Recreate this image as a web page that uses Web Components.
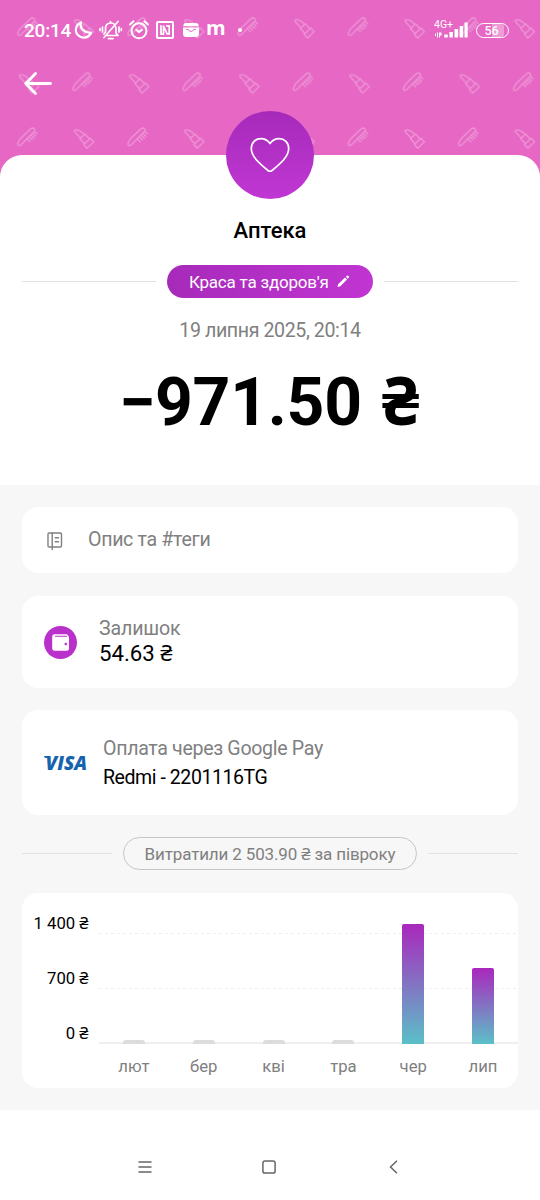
<!DOCTYPE html>
<html lang="uk">
<head>
<meta charset="utf-8">
<title>Аптека</title>
<style>
  body { margin: 0; background: #fff; font-family: Roboto, "Noto Sans", sans-serif; color: #000; }
</style>
</head>
<body>
<payment-screen></payment-screen>
<script>
const define = (name, html) => {
  const t = document.createElement('template');
  t.innerHTML = html;
  customElements.define(name, class extends HTMLElement {
    constructor() {
      super();
      this.attachShadow({ mode: 'open' }).appendChild(t.content.cloneNode(true));
    }
  });
};

define('status-bar', `
<style>
  :host { display: flex; align-items: center; height: 60px; padding: 0 31px 0 24px; box-sizing: border-box; color: #fff; }
  .time { font-size: 19px; font-weight: 500; width: 50px; letter-spacing: -.2px; white-space: nowrap; }
  svg { display: block; flex: none; overflow: visible; fill: none; stroke: #fff; stroke-width: 2; stroke-linecap: round; stroke-linejoin: round; }
  .m { font-family: "Open Sans", sans-serif; font-weight: 700; font-size: 20px; line-height: 20px; width: 18px; margin: -4px 0 0 7px; }
  .dot { width: 4px; height: 4px; border-radius: 2px; background: #fff; margin-left: 14px; }
  .net { margin-left: auto; width: 35px; height: 18px; position: relative; }
  .g { display: block; font-size: 10.5px; line-height: 9px; white-space: nowrap; margin-top: -1px; }
  .bat { box-sizing: border-box; width: 33px; height: 15px; border: 1.5px solid #fff; border-radius: 8px; margin-left: 7px; padding: 0 3px 0 1px; font-size: 12.5px; font-weight: 500; line-height: 13px; text-align: center;
    background: linear-gradient(90deg, transparent 0 14px, rgba(255,255,255,.35) 14px 26px, transparent 26px) content-box; }
</style>
<span class="time">20:14</span>
<svg width="18" height="18" viewBox="0 0 18 18"><path stroke-width="2.200" d="M7 1.500A7.800 7.800 0 1 0 17 11.500A9 8 0 0 1 7 1.500Z"/></svg>
<svg width="23" height="20" viewBox="0 0 23 20" style="margin-left:7px;stroke-width:1.700"><path d="M7.500 15.500H19L17 13V9C17 5 15 3 11.800 3S6.500 5 6.500 8.500V12L5 14M11.500 1.500V2.500M9.500 18.700H14M5 17.500L19 1.500M3.500 7V12M1 8.500V10.500M20 7V12M22.300 8.500V10.500"/></svg>
<svg width="20" height="20" viewBox="0 0 20 20" style="margin-left:7px"><circle cx="10" cy="10.800" r="7.500"/><path d="M7.200 9.800L9.800 12.100L13 9.800M1 4.500L4.500 1.300M15.500 1.300L19 4.500"/></svg>
<svg width="18" height="18" viewBox="0 0 18 18" style="margin-left:7px"><rect x="1" y="1" width="16" height="16" rx=".8"/><path style="stroke-width:1.700" d="M5 4.800V13.200H7.500V5L11.200 13H13.200V4.800H10.800"/></svg>
<svg width="16" height="14" viewBox="0 0 16 14" style="margin-left:9px"><path style="stroke:none" fill="#fff" d="M3 0H13Q15.700 0 15.700 3.200H.3Q.3 0 3 0ZM0 4.500H16V10.500Q16 14 13 14H3Q0 14 0 10.500Z"/><path d="M3.500 6.500H5L7 8.300H9L11 6.500H12.500" style="stroke:#e667c4;stroke-width:1"/></svg>
<span class="m">m</span><span class="dot"></span>
<div class="net"><span class="g">4G+</span>
<svg style="position:absolute;left:0;top:1px" width="34" height="16" viewBox="0 0 34 16"><path style="stroke:none" fill="#fff" d="M1 11.500h1v2.500H1zM3 10.500h1v5H3zM5 10.500h2.500v3H6v2H5zM10.200 12.500h3.600v3h-3.600zM15.400 10h3.500v5.500h-3.500zM20.500 7h3.600v8.500h-3.600zM25.700 4h3.500v11.500h-3.500zM30.500 .5h3.200v15h-3.200z"/></svg></div>
<div class="bat">56</div>`);

define('beauty-pattern', `
<style>:host { display: block; } svg { display: block; width: 100%; height: 100%; }</style>
<svg aria-hidden="true">
  <defs>
    <g id="comb"><path d="M.9 18Q-.2 17 .8 15.500L2.500 12L13.400 1.600Q15.500 0 17.200 1.800Q18.200 2.900 17.200 4L9.600 11.400L8.300 13L3.700 17.600Q2 19 .9 18ZM9.600 11.400L12.600 14.500M11.500 9.600L14.800 12.600M13.300 7.800L17 11M15.100 6L18.500 9M16.900 4.200L20 6.500"/></g>
    <g id="lipstick"><path transform="translate(9.600 10) rotate(-43)" d="M-4.600 4.300H4.600V9.300H-4.600ZM-3.400 4.300V-2.500H3.400V4.300M-2.500 -2.500V-9.800C-2.500 -12.800 -1.500 -12.800 0 -11.300C1.800 -9.500 2.500 -7.500 2.500 -5.500V-2.500"/></g>
    <pattern id="tile" width="110.200" height="110.200" patternUnits="userSpaceOnUse">
      <g fill="none" stroke="#fff" stroke-opacity=".3" stroke-width="1.300" stroke-linejoin="round" stroke-linecap="round">
        <use href="#comb" x="17.300" y="17"/><use href="#comb" x="72.400" y="72.100"/>
        <use href="#lipstick" x="74.500" y="18"/><use href="#lipstick" x="19.400" y="73.100"/>
      </g>
    </pattern>
  </defs>
  <rect width="100%" height="100%" fill="url(#tile)"/>
</svg>`);

define('back-button', `
<style>:host { display: block; padding: 12px 0 0 24px; } svg { display: block; }</style>
<svg width="28" height="23" viewBox="0 0 28 23" fill="none" stroke="#fff" stroke-width="2.800" stroke-linecap="round" stroke-linejoin="round"><path d="M11.500 1.500L1.800 11.500L11.500 21.500M1.800 11.500H26.500"/></svg>`);

define('divider-row', `
<style>
  :host { display: flex; align-items: center; gap: 11px; margin: 0 22px; }
  :host::before, :host::after { content: ""; flex: 1; height: 1px; background: #e1e1e1; }
</style><slot></slot>`);

define('category-chip', `
<style>
  :host { display: flex; align-items: center; justify-content: center; gap: 8px; box-sizing: border-box; width: 206px; height: 33px; border-radius: 17px; color: #fff; font-size: 17px; letter-spacing: -.2px; white-space: nowrap; padding-right: 2px; background: linear-gradient(100deg, #a62aba, #c135d2); }
</style><slot></slot>
<svg width="12.500" height="12.500" viewBox="0 0 13 13" fill="#fff"><path d="M.5 12.500L1.200 9.500L8.300 2.700L10.400 4.800L3.500 11.700ZM9.200 1.900L10.600.6Q11.100.2 11.600.7L12.400 1.500Q12.900 2 12.500 2.500L11.200 3.900Z"/></svg>`);

define('outline-chip', `
<style>:host { display: flex; align-items: center; justify-content: center; box-sizing: border-box; width: 294px; height: 33px; border: 1.5px solid #c6c6c6; border-radius: 17px; color: #808080; font-size: 17px; letter-spacing: -.14px; white-space: nowrap; }</style><slot></slot>`);

define('category-badge', `
<style>:host { display: flex; align-items: center; justify-content: center; width: 88px; height: 88px; border-radius: 50%; background: linear-gradient(#a62aba, #c037d3); }</style>
<svg width="40" height="36" viewBox="0 0 40 36" fill="none" stroke="#fff" stroke-width="1.700" stroke-linejoin="round"><path d="M20 6.500C17.500 3 14 1.600 11 1.600C5.500 1.600 1.300 5.500 1.300 11.500C1.300 19.500 9 26 18 33.500Q20 35 22 33.500C31 26 38.700 19.500 38.700 11.500C38.700 5.500 34.500 1.600 29 1.600C26 1.600 22.500 3 20 6.500Z"/></svg>`);

define('info-card', `
<style>
  :host { display: flex; align-items: center; box-sizing: border-box; margin: 0 22px; padding-left: 22px; border-radius: 16px; background: #fff; }
  .text { display: flex; flex-direction: column; white-space: nowrap; }
  ::slotted([slot=icon]) { flex: none; display: block; }
</style>
<slot name="icon"></slot><div class="text"><slot></slot></div>`);

define('wallet-icon', `
<style>:host { display: block; } svg { display: block; }</style>
<svg width="33" height="33" viewBox="0 0 33 33"><circle cx="16.500" cy="16.500" r="16.500" fill="#b930cb"/><path d="M10.500 8.200H22.500Q24 8.200 24 9.800Q25 10.300 25 12V22.500Q25 24.800 22.700 24.800H10.700Q8.200 24.800 8.200 22.300V10.500Q8.200 8.200 10.500 8.200Z" fill="#fff"/><path d="M11.500 10.200H22.500" stroke="#b930cb" stroke-width="1.100" stroke-linecap="round"/><circle cx="21.800" cy="18" r="1.300" fill="#b930cb"/></svg>`);

define('note-icon', `
<style>:host { display: block; } svg { display: block; }</style>
<svg width="16" height="19" viewBox="0 0 16 19" fill="none" stroke="#808080" stroke-width="1.400" stroke-linecap="round"><rect x="1" y="1" width="13.500" height="14" rx="1.200"/><path d="M5.200 1V17.500M8.300 5.700H11.500M8.300 9.700H11.500"/></svg>`);

define('visa-logo', `
<style>:host { display: flex; position: relative; font: italic 800 19px/20px "Open Sans", sans-serif; color: #1763ae; }
:host::before { content: ""; position: absolute; left: 0; top: 3px; width: 6px; height: 2px; background: #1763ae; border-radius: 0 2px 0 2px; }
span { display: block; margin-left: 1.500px; }</style><span>VISA</span>`);

define('spend-chart', `
<style>
  :host { display: grid; grid-template-columns: 66.500px 11px 1fr; grid-template-rows: 151px 1fr; margin: 0 22px; height: 195px; border-radius: 16px; background: #fff; overflow: hidden; font-size: 16.700px; }
  .y { display: flex; flex-direction: column; align-items: flex-end; padding-top: 21px; gap: 35px; line-height: 20px; white-space: nowrap; height: 130px; }
  .plot { grid-column: 3; display: flex; align-items: flex-end; box-sizing: border-box; background:
    linear-gradient(#efefef,#efefef) 0 149px/100% 2px no-repeat,
    repeating-linear-gradient(90deg,#eeeeee 0 3px,transparent 3px 6px) 0 40px/100% 1px no-repeat,
    repeating-linear-gradient(90deg,#eeeeee 0 3px,transparent 3px 6px) 0 95px/100% 1px no-repeat; }
  .col { flex: 1; display: flex; justify-content: center; }
  .bar { width: 22px; height: 4px; border-radius: 3px 3px 0 0; background: #dcdcdc; }
  .on { border-radius: 2px 2px 0 0; background: linear-gradient(#aa27bd, #5bc0c8); }
  .plot, .x { margin-left: -.5px; }
  .x { grid-column: 3; display: flex; color: #808080; padding-top: 13px; line-height: 20px; }
</style>
<div class="y"><span>1 400 ₴</span><span>700 ₴</span><span>0 ₴</span></div>
<div class="plot">
  <div class="col"><div class="bar"></div></div><div class="col"><div class="bar"></div></div><div class="col"><div class="bar"></div></div><div class="col"><div class="bar"></div></div>
  <div class="col"><div class="bar on" style="height:120px"></div></div><div class="col"><div class="bar on" style="height:76px"></div></div>
</div>
<div class="x"><div class="col">лют</div><div class="col">бер</div><div class="col">кві</div><div class="col">тра</div><div class="col">чер</div><div class="col">лип</div></div>`);

define('nav-bar', `
<style>:host { display: flex; align-items: center; height: 90px; padding: 24px 0 0 138px; box-sizing: border-box; }
svg { display: block; fill: none; stroke: #666; stroke-width: 1.5; }</style>
<svg width="14" height="14" viewBox="0 0 14 14"><path d="M.5 2H13.500M.5 7H13.500M.5 12H13.500"/></svg>
<svg style="margin-left:110px" width="14" height="14" viewBox="0 0 14 14"><rect x=".9" y=".9" width="12.200" height="12.200" rx="2.200"/></svg>
<svg style="margin-left:113px" width="9" height="14" viewBox="0 0 9 14"><path d="M8 .7L1.500 7L8 13.300"/></svg>`);

define('payment-screen', `
<style>
  :host { display: block; width: 540px; height: 1200px; overflow: hidden; background: #fff; }
  header { position: relative; height: 177px; background: #e667c4; }
  beauty-pattern { position: absolute; inset: 0; }
  status-bar, back-button { position: relative; }
  .sheet { position: relative; height: 330px; margin-top: -22px; border-radius: 22px 22px 0 0; background: #fff; display: flex; flex-direction: column; text-align: center; }
  category-badge { margin: -44px auto 0; }
  h1 { margin: 17px 0 0; font-size: 22px; line-height: 30px; font-weight: 500; }
  .cat { margin-top: 19px; }
  .date { margin-top: 21px; font-size: 19.600px; letter-spacing: -.4px; line-height: 24px; color: #808080; }
  .sum { margin: 20px 2px 0 0; font-size: 66px; line-height: 80px; font-weight: 700; white-space: nowrap; letter-spacing: -.3px; word-spacing: 4px; }
  main { background: #f7f7f7; height: 625px; padding-top: 22px; box-sizing: border-box; display: flex; flex-direction: column; }
  .k { font-size: 19.600px; letter-spacing: -.33px; line-height: 24px; color: #808080; }
  .v { font-size: 22.200px; line-height: 25px; }
</style>
<header><beauty-pattern></beauty-pattern><status-bar></status-bar><back-button></back-button></header>
<section class="sheet">
  <category-badge></category-badge>
  <h1>Аптека</h1>
  <divider-row class="cat"><category-chip>Краса та здоров'я</category-chip></divider-row>
  <div class="date">19 липня 2025, 20:14</div>
  <div class="sum">−971.50 ₴</div>
</section>
<main>
  <info-card style="height:66px"><note-icon slot="icon" style="margin:2px 25px 0 3px"></note-icon><span class="k">Опис та #теги</span></info-card>
  <info-card style="height:92px;margin-top:23px"><wallet-icon slot="icon" style="margin-right:22px"></wallet-icon><span class="k" style="margin-top:-2px;letter-spacing:-.15px">Залишок</span><span class="v">54.63 ₴</span></info-card>
  <info-card style="height:105px;margin-top:22px"><visa-logo slot="icon" style="width:59px"></visa-logo><span class="k" style="margin-top:1px">Оплата через Google Pay</span><span class="v" style="font-size:19.500px;letter-spacing:-.43px;margin-top:4px">Redmi - 2201116TG</span></info-card>
  <divider-row style="margin-top:22px"><outline-chip>Витратили 2 503.90 ₴ за півроку</outline-chip></divider-row>
  <spend-chart style="margin-top:23px"></spend-chart>
</main>
<nav-bar></nav-bar>`);
</script>
</body>
</html>
